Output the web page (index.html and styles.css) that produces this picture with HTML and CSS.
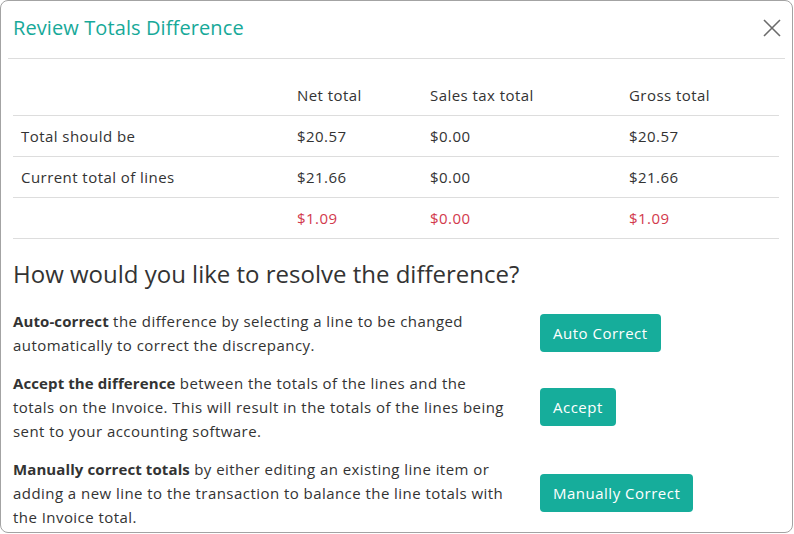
FILE: index.html
```html
<!DOCTYPE html>
<html lang="en">
<head>
    <meta charset="UTF-8">
    <meta name="viewport" content="width=device-width, initial-scale=1.0">
    <title>Review Totals Difference</title>
    <link rel="stylesheet" href="styles.css">
</head>
<body>
    <div class="modal">
        <div class="modal-header">
            <h1 class="modal-title">Review Totals Difference</h1>
            <button class="close-btn" aria-label="Close">
                <svg width="18" height="18" viewBox="0 0 18 18">
                    <path d="M1 1 L17 17 M17 1 L1 17" stroke="#6b6b6b" stroke-width="1.6" fill="none"/>
                </svg>
            </button>
        </div>
        <hr class="divider">

        <div class="modal-body">
            <table class="totals">
                <colgroup>
                    <col class="col-label">
                    <col class="col-net">
                    <col class="col-tax">
                    <col class="col-gross">
                </colgroup>
                <thead>
                    <tr>
                        <th></th>
                        <th>Net total</th>
                        <th>Sales tax total</th>
                        <th>Gross total</th>
                    </tr>
                </thead>
                <tbody>
                    <tr>
                        <td>Total should be</td>
                        <td>$20.57</td>
                        <td>$0.00</td>
                        <td>$20.57</td>
                    </tr>
                    <tr>
                        <td>Current total of lines</td>
                        <td>$21.66</td>
                        <td>$0.00</td>
                        <td>$21.66</td>
                    </tr>
                    <tr class="diff">
                        <td></td>
                        <td>$1.09</td>
                        <td>$0.00</td>
                        <td>$1.09</td>
                    </tr>
                </tbody>
            </table>

            <h2 class="resolve-title">How would you like to resolve the difference?</h2>

            <div class="options">
                <p class="option-text"><b>Auto-correct</b> the difference by selecting a line to be changed automatically to correct the discrepancy.</p>
                <div><button class="action-btn">Auto Correct</button></div>

                <p class="option-text"><b>Accept the difference</b> between the totals of the lines and the totals on the Invoice. This will result in the totals of the lines being sent to your accounting software.</p>
                <div><button class="action-btn">Accept</button></div>

                <p class="option-text"><b>Manually correct totals</b> by either editing an existing line item or adding a new line to the transaction to balance the line totals with the Invoice total.</p>
                <div><button class="action-btn">Manually Correct</button></div>
            </div>
        </div>
    </div>
</body>
</html>
```

FILE: styles.css
```css
* {
    margin: 0;
    padding: 0;
    box-sizing: border-box;
}

body {
    font-family: "Open Sans", Arial, sans-serif;
    color: #333333;
    background-color: #ffffff;
}

.modal {
    width: 793px;
    height: 533px;
    border: 1px solid #a3a3a3;
    border-radius: 8px;
    overflow: hidden;
    background-color: #ffffff;
}

.modal-header {
    display: flex;
    justify-content: space-between;
    align-items: center;
    height: 57px;
    padding: 0 12px 4px;
}

.modal-title {
    font-size: 20px;
    font-weight: 400;
    color: #17a999;
    letter-spacing: 0.1px;
}

.close-btn {
    display: flex;
    background: none;
    border: none;
    cursor: pointer;
    margin-right: -1px;
}

.divider {
    border: none;
    border-top: 1px solid #dddddd;
    margin: 0 7px;
}

.modal-body {
    padding: 0 12px;
}

/* Totals table */
.totals {
    width: 766px;
    margin-top: 16px;
    border-collapse: collapse;
    table-layout: fixed;
    font-size: 15px;
    letter-spacing: 0.45px;
}

.col-label { width: 276px; }
.col-net { width: 133px; }
.col-tax { width: 199px; }
.col-gross { width: 158px; }

.totals th,
.totals td {
    text-align: left;
    font-weight: 400;
    line-height: 20px;
    padding: 10px 8px;
    border-bottom: 1px solid #dddddd;
}

.totals .diff td {
    color: #d23a4c;
}

/* Resolve options */
.resolve-title {
    font-size: 24px;
    font-weight: 400;
    line-height: 29px;
    margin-top: 20px;
}

.options {
    display: grid;
    grid-template-columns: 527px auto;
    align-items: center;
    row-gap: 14px;
    margin-top: 21px;
}

.option-text {
    font-size: 15px;
    line-height: 24px;
    letter-spacing: 0.45px;
    padding-right: 30px;
}

.option-text b {
    font-weight: 700;
    letter-spacing: 0.1px;
}

.action-btn {
    height: 38px;
    padding: 0 13px;
    border: none;
    border-radius: 4px;
    background-color: #16ad9b;
    color: #ffffff;
    font-family: inherit;
    font-size: 15px;
    letter-spacing: 0.5px;
    cursor: pointer;
}
```
